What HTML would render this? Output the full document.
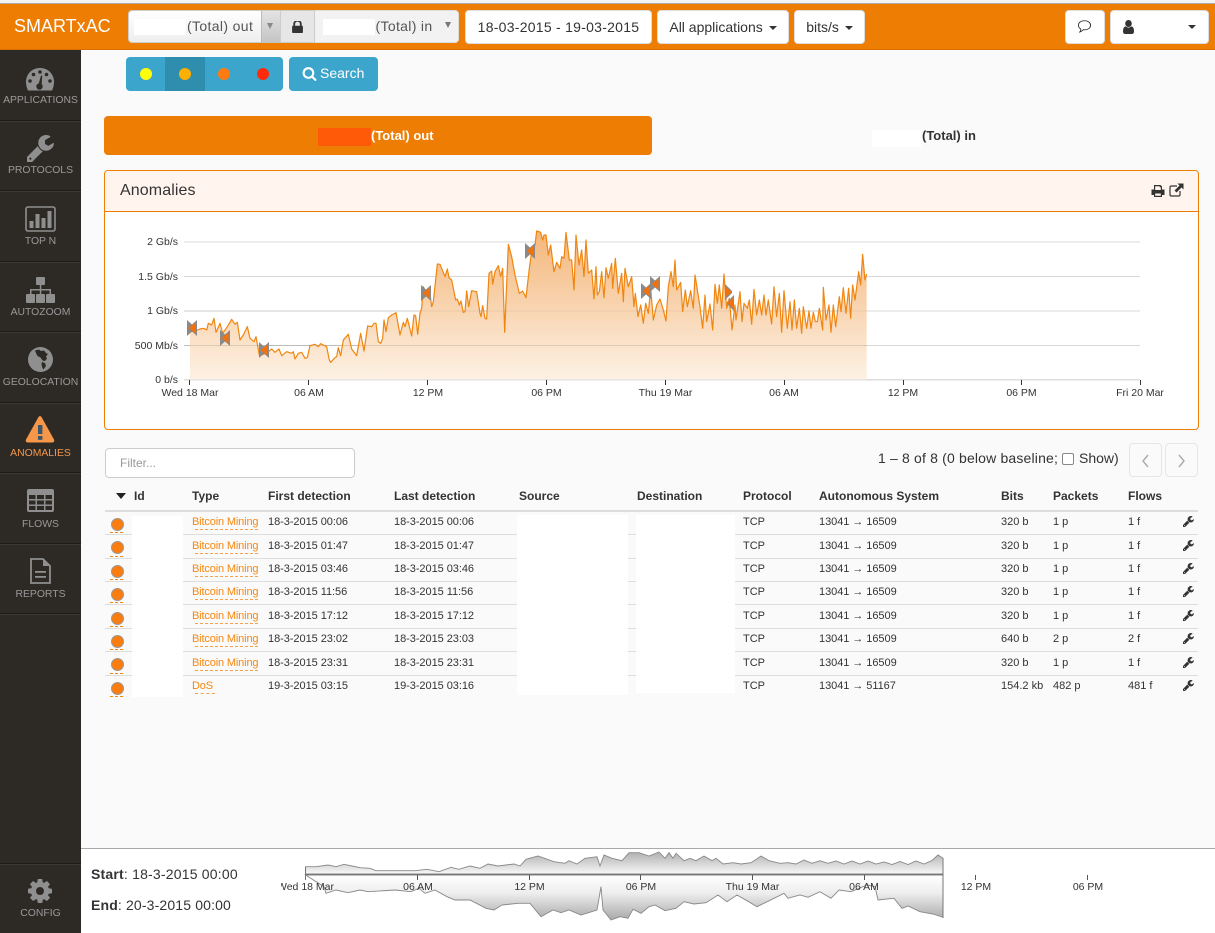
<!DOCTYPE html>
<html><head><meta charset="utf-8"><title>SMARTxAC</title>
<style>
html,body{margin:0;padding:0}
body{width:1215px;height:933px;position:relative;overflow:hidden;background:#fafafa;font-family:"Liberation Sans",sans-serif;color:#333}
.a,.t,.m,.c{position:absolute}
.t{white-space:nowrap}
.btn{position:absolute;top:10px;height:32px;line-height:33px;background:#fff;border:1px solid #ddd;border-radius:4px;font-size:14px;color:#333;text-align:center;white-space:nowrap}
.car{display:inline-block;width:0;height:0;border:4px solid transparent;border-top-color:#333;border-bottom:0;vertical-align:middle;margin-left:2px}
.m{left:0;width:81px;text-align:center;font-size:10.400px;line-height:12px;color:#999;white-space:nowrap}
.sep{position:absolute;left:0;width:81px;height:1px;background:#1d1b18;border-bottom:1px solid #3c3935}
.h{position:absolute;top:489px;font-size:12px;font-weight:bold;line-height:14px;color:#333;white-space:nowrap}
.l{position:absolute;left:105px;width:1093px;height:1px;background:#ddd}
.r{position:absolute;left:0;width:1215px;height:22px;line-height:22px;font-size:11px;color:#333}
.r span{position:absolute;white-space:nowrap}
.c1{left:192px;color:#f5870f;letter-spacing:-.15px}.c2{left:268px;letter-spacing:-.05px}.c3{left:394px;letter-spacing:-.05px}.c6{left:743px}.c7{left:819px;letter-spacing:-.05px}.c8{left:1001px}.c9{left:1053px}.c10{left:1128px}
.u{position:absolute;left:195px;width:63px;top:18px;border-top:1px dashed #f5a04a}
.o{position:absolute;left:110.500px;top:7px;width:11px;height:11px;border-radius:50%;background:#fb7d10;border:1px solid #999}
.d{position:absolute;left:110px;top:21px;width:13px;border-top:1px dashed #f5870f}
.w{position:absolute;left:1183px;top:5px;width:11px;height:11px}
.dot{position:absolute;top:67px;width:12px;height:12px;border-radius:50%}
svg{display:block}
</style></head><body>

<!-- top bar -->
<div class="a" style="left:0;top:0;width:1215px;height:3px;background:#f4f4f4;border-bottom:1px solid #aaa"></div>
<div class="a" style="left:0;top:4px;width:1215px;height:45px;background:#ee7d04;border-bottom:1px solid #d86f00"></div>
<div class="t" style="left:14px;top:15px;font-size:18px;line-height:22px;color:#fff">SMARTxAC</div>

<div class="a" style="left:128px;top:10px;width:153px;height:33px;background:linear-gradient(#fff,#eee);border-radius:4px 0 0 4px;border:1px solid #ccc;box-sizing:border-box"></div>
<div class="a" style="left:134px;top:19px;width:52px;height:16px;background:#fff"></div>
<div class="t" style="left:187px;top:18px;font-size:14px;line-height:17px;color:#555;letter-spacing:.36px">(Total) out</div>
<div class="a" style="left:261px;top:11px;width:18px;height:32px;background:linear-gradient(#e4e4e4,#c4c4c4);border-left:1px solid #bbb"></div>
<div class="a" style="left:267px;top:23px;border:3px solid transparent;border-top:6px solid #888;border-bottom:0"></div>
<div class="a" style="left:280px;top:10px;width:35px;height:33px;background:#e6e6e6;border:1px solid #ccc;box-sizing:border-box"></div>
<svg class="a" style="left:292px;top:21px" width="11" height="12" viewBox="320 256 1152 1280"><path fill="#333" d="M640 768h512v-192q0-106-75-181t-181-75-181 75-75 181v192zm832 96v576q0 40-28 68t-68 28h-960q-40 0-68-28t-28-68v-576q0-40 28-68t68-28h32v-192q0-184 132-316t316-132 316 132 132 316v192h32q40 0 68 28t28 68z"/></svg>
<div class="a" style="left:315px;top:10px;width:144px;height:33px;background:#f2f2f2;border-radius:0 4px 4px 0;border:1px solid #ddd;border-left:0;box-sizing:border-box"></div>
<div class="a" style="left:323px;top:19px;width:52px;height:16px;background:#fff"></div>
<div class="t" style="left:375.500px;top:18px;font-size:14px;line-height:17px;color:#555;letter-spacing:.33px">(Total) in</div>
<div class="a" style="left:445px;top:22px;border:3.500px solid transparent;border-top:6px solid #777;border-bottom:0"></div>

<div class="btn" style="left:465px;width:185px;letter-spacing:.26px">18-03-2015 - 19-03-2015</div>
<div class="btn" style="left:657px;width:130px">All applications <i class="car"></i></div>
<div class="btn" style="left:794px;width:69px">bits/s <i class="car"></i></div>
<div class="btn" style="left:1065px;width:38px"></div>
<svg class="a" style="left:1077px;top:19px" width="15" height="15" viewBox="0 0 15 14"><path d="M7.500 1.200C11 1.200 13.600 3.100 13.600 5.800C13.600 8.500 11 10.300 7.800 10.300C7.300 10.300 6.800 10.250 6.300 10.150C5.400 11.300 4.200 12 2.900 12.400C3.500 11.500 3.800 10.600 3.700 9.500C2.300 8.700 1.400 7.400 1.400 5.800C1.400 3.100 4 1.200 7.500 1.200Z" fill="none" stroke="#333" stroke-width=".9"/></svg>
<div class="btn" style="left:1110px;width:97px"></div>
<svg class="a" style="left:1123px;top:20px" width="11" height="14" viewBox="256 128 1280 1536" preserveAspectRatio="none"><path fill="#333" d="M1536 1399q0 109-62.500 187t-150.500 78h-854q-88 0-150.500-78t-62.500-187q0-85 8.500-160.500t31.500-152 58.500-131 94-89 134.500-34.500q131 128 313 128t313-128q76 0 134.500 34.500t94 89 58.500 131 31.500 152 8.500 160.500zm-256-887q0 159-112.500 271.500t-271.500 112.500-271.500-112.500-112.500-271.500 112.500-271.500 271.500-112.500 271.500 112.500 112.500 271.500z"/></svg>
<div class="a" style="left:1188px;top:25px;border:4px solid transparent;border-top-color:#333;border-bottom:0"></div>

<!-- sidebar -->
<div class="a" style="left:0;top:50px;width:81px;height:883px;background:#2d2a26"></div>
<div class="sep" style="top:120px"></div><div class="sep" style="top:190px"></div><div class="sep" style="top:261px"></div><div class="sep" style="top:331px"></div><div class="sep" style="top:402px"></div><div class="sep" style="top:472px"></div><div class="sep" style="top:543px"></div><div class="sep" style="top:613px"></div><div class="sep" style="top:863px"></div>

<svg class="a" style="left:25px;top:67px" width="30" height="25" viewBox="0 0 30 25"><path fill="#8f8f8f" fill-rule="evenodd" d="M15 1C7 1 1 7 1 15C1 18 1.800 21 3 23.500H27C28.200 21 29 18 29 15C29 7 23 1 15 1Z"/><g fill="#2d2a26"><circle cx="15" cy="5" r="1.800"/><circle cx="8.500" cy="7.500" r="1.800"/><circle cx="21.500" cy="7.500" r="1.800"/><circle cx="5" cy="14" r="1.800"/><circle cx="25" cy="14" r="1.800"/><circle cx="14.500" cy="19.500" r="3.200"/><path d="M13 19L16 8.500L17.200 8.800L16.500 20Z"/></g></svg>
<div class="m" style="top:95px">APPLICATIONS</div>

<svg class="a" style="left:27px;top:135px" width="27" height="27" viewBox="128 128 1536 1536"><path fill="#8f8f8f" d="M384 1472q0-26-19-45t-45-19-45 19-19 45 19 45 45 19 45-19 19-45zm644-420l-682 682q-37 37-90 37-52 0-91-37l-106-108q-38-36-38-90 0-53 38-91l681-681q39 98 114.500 173.500t173.500 114.500zm634-435q0 39-23 106-47 134-164.500 217.500t-258.500 83.500q-185 0-316.500-131.500t-131.500-316.500 131.500-316.500 316.500-131.500q58 0 121.500 16.500t107.500 46.500q16 11 16 28t-16 28l-293 169v224l193 107q5-3 79-48.500t135.500-81 70.500-35.500q15 0 23.500 10t8.500 25z"/></svg>
<div class="m" style="top:165px">PROTOCOLS</div>

<svg class="a" style="left:25px;top:206px" width="31" height="26" viewBox="0 0 31 26"><rect x="1" y="1" width="29" height="24" rx="2" fill="none" stroke="#8f8f8f" stroke-width="1.600"/><g fill="#8f8f8f"><rect x="4.500" y="15" width="4" height="7"/><rect x="10.500" y="8" width="4" height="14"/><rect x="16.500" y="12" width="4" height="10"/><rect x="22.500" y="5" width="4" height="17"/></g></svg>
<div class="m" style="top:236px">TOP N</div>

<svg class="a" style="left:25px;top:277px" width="30" height="27" viewBox="0 0 30 27"><g fill="#8f8f8f"><rect x="11" y="0" width="9" height="8" rx="1"/><rect x="1" y="17" width="9" height="9" rx="1"/><rect x="11" y="17" width="9" height="9" rx="1"/><rect x="21" y="17" width="9" height="9" rx="1"/><rect x="14.800" y="8" width="1.500" height="9"/><rect x="5" y="12" width="21" height="1.500"/><rect x="5" y="12" width="1.500" height="5"/><rect x="24.500" y="12" width="1.500" height="5"/></g></svg>
<div class="m" style="top:307px">AUTOZOOM</div>

<svg class="a" style="left:28px;top:347px" width="25" height="25" viewBox="0 0 25 25"><circle cx="12.500" cy="12.500" r="12.500" fill="#8f8f8f"/><path fill="#2d2a26" d="M7 3.500L11 2.500L13 4L16 3.500L18 6L20 7L18 9.500L19 11.500L17 14L14.500 13.500L12.500 10.500L9.500 9L8 6ZM14 15L17 16L18 19L15.500 22.500L14 20L13.500 17Z"/></svg>
<div class="m" style="top:377px">GEOLOCATION</div>

<svg class="a" style="left:25px;top:415px" width="30" height="28" viewBox="0 0 30 28"><path fill="#f59648" d="M13.500 2Q15 0 16.500 2L29 24.500Q30 27 27.500 27.500H2.500Q0 27 1 24.500Z"/><rect x="13" y="10" width="4.400" height="9" fill="#39566a"/><rect x="13" y="21" width="4.400" height="3.800" fill="#39566a"/></svg>
<div class="m" style="top:448px;color:#f5964a">ANOMALIES</div>

<svg class="a" style="left:27px;top:489px" width="27" height="24" viewBox="0 0 27 24"><rect x="0" y="0" width="27" height="23" rx="2" fill="#8f8f8f"/><g fill="#2d2a26"><rect x="2" y="6" width="6.500" height="4"/><rect x="10" y="6" width="7" height="4"/><rect x="18.500" y="6" width="6.500" height="4"/><rect x="2" y="11.500" width="6.500" height="4"/><rect x="10" y="11.500" width="7" height="4"/><rect x="18.500" y="11.500" width="6.500" height="4"/><rect x="2" y="17" width="6.500" height="4"/><rect x="10" y="17" width="7" height="4"/><rect x="18.500" y="17" width="6.500" height="4"/></g></svg>
<div class="m" style="top:519px">FLOWS</div>

<svg class="a" style="left:30px;top:558px" width="21" height="26" viewBox="0 0 21 26"><path d="M1 1H13L20 8V25H1Z" fill="none" stroke="#8f8f8f" stroke-width="1.800"/><path d="M13 1V8H20Z" fill="#8f8f8f"/><rect x="5" y="13" width="11" height="1.800" fill="#8f8f8f"/><rect x="5" y="18" width="11" height="1.800" fill="#8f8f8f"/></svg>
<div class="m" style="top:589px">REPORTS</div>

<svg class="a" style="left:28px;top:879px" width="24" height="24" viewBox="128 128 1536 1536"><path fill="#8f8f8f" d="M1152 896q0-106-75-181t-181-75-181 75-75 181 75 181 181 75 181-75 75-181zm512-109v222q0 12-8 23t-20 13l-185 28q-19 54-39 91 35 50 107 138 10 12 10 25t-9 23q-27 37-99 108t-94 71q-12 0-26-9l-138-108q-44 23-91 38-16 136-29 186-7 28-36 28h-222q-14 0-24.500-8.500t-11.500-21.500l-28-184q-49-16-90-37l-141 107q-10 9-25 9-14 0-25-11-126-114-165-168-7-10-7-23 0-12 8-23 15-21 51-66.500t54-70.500q-27-50-41-99l-183-27q-13-2-21-12.500t-8-23.500v-222q0-12 8-23t19-13l186-28q14-46 39-92-40-57-107-138-10-12-10-24 0-10 9-23 26-36 98.500-107.500t94.500-71.500q13 0 26 10l138 107q44-23 91-38 16-136 29-186 7-28 36-28h222q14 0 24.500 8.500t11.500 21.500l28 184q49 16 90 37l142-107q9-9 24-9 13 0 25 10 129 119 165 170 7 8 7 22 0 12-8 23-15 21-51 66.500t-54 70.500q26 50 41 98l183 28q13 2 21 12.500t8 23.500z"/></svg>
<div class="m" style="top:908px">CONFIG</div>

<!-- severity buttons -->
<div class="a" style="left:126px;top:57px;width:157px;height:34px;background:#3ba5cb;border-radius:4px"></div>
<div class="a" style="left:165px;top:57px;width:40px;height:34px;background:#2f8dae"></div>
<div class="dot" style="left:140px;top:68px;background:#ffff0a"></div>
<div class="dot" style="left:179px;top:68px;background:#ffb000"></div>
<div class="dot" style="left:218px;top:68px;background:#ff7b10"></div>
<div class="dot" style="left:257px;top:68px;background:#ff2a0a"></div>
<div class="a" style="left:289px;top:57px;width:89px;height:34px;background:#3ba5cb;border-radius:4px"></div>
<svg class="a" style="left:302px;top:66px" width="15" height="15" viewBox="0 0 1792 1792"><path fill="#fff" d="M1216 832q0-185-131.500-316.500t-316.500-131.500-316.500 131.500-131.500 316.500 131.500 316.500 316.500 131.500 316.500-131.500 131.500-316.500zm512 832q0 52-38 90t-90 38q-54 0-90-38l-343-342q-179 124-399 124-143 0-273.500-55.500t-225-150-150-225-55.500-273.500 55.500-273.500 150-225 225-150 273.500-55.500 273.500 55.500 225 150 150 225 55.500 273.500q0 220-124 399l343 343q37 37 37 90z"/></svg>
<div class="t" style="left:320px;top:65px;font-size:14px;line-height:17px;color:#fff">Search</div>

<!-- tabs -->
<div class="a" style="left:104px;top:116px;width:548px;height:39px;background:#ee7d04;border-radius:4px"></div>
<div class="a" style="left:318px;top:128px;width:53px;height:18px;background:#ff5a08"></div>
<div class="t" style="left:371px;top:128px;font-size:13px;font-weight:bold;line-height:16px;color:#fff">(Total) out</div>
<div class="a" style="left:872px;top:130px;width:49px;height:17px;background:#fff"></div>
<div class="t" style="left:922px;top:128px;font-size:13px;font-weight:bold;line-height:16px;color:#333">(Total) in</div>

<!-- panel -->
<div class="a" style="left:104px;top:170px;width:1095px;height:260px;box-sizing:border-box;background:#fff;border:1px solid #ee7d04;border-radius:4px"></div>
<div class="a" style="left:105px;top:171px;width:1093px;height:40px;background:#fff5ee;border-bottom:1px solid #ee7d04;border-radius:3px 3px 0 0"></div>
<div class="t" style="left:120px;top:181px;font-size:16px;line-height:19px;color:#333;letter-spacing:.1px">Anomalies</div>
<svg class="a" style="left:1151px;top:184px" width="14" height="14" viewBox="0 0 14 14"><path fill="#333" fill-rule="evenodd" d="M3 1H9.500L11 2.500V5.500H13.500V11H11V13H3V11H.500V5.500H3ZM4.200 2.200V6H9.800V3.300H8.700V2.200ZM4.200 9.500V11.800H9.800V9.500Z"/></svg>
<svg class="a" style="left:1169px;top:183px" width="15" height="14" viewBox="0 0 15 14"><path d="M8 3H2.500Q1 3 1 4.500V11.500Q1 13 2.500 13H9.500Q11 13 11 11.500V8" fill="none" stroke="#333" stroke-width="1.200"/><path fill="#333" d="M8.500 .500H14.500V6.500L12.500 4.500L7.500 9.500L5.500 7.500L10.500 2.500Z"/></svg>

<!-- chart -->
<svg class="a" style="left:0;top:0" width="1215" height="433" viewBox="0 0 1215 433">
<defs>
<linearGradient id="g" x1="0" y1="0" x2="0" y2="1"><stop offset="0" stop-color="#f4b67a"/><stop offset="1" stop-color="#fdf1e4"/></linearGradient>
<g id="mk"><path d="M-5 -8V8L0 3.500L5 8V-8L0 -3.500Z" fill="#8a8a8a"/><path d="M3.500 -5.500V5.500L-3.500 0Z" fill="#f0720f"/></g>
</defs>
<g stroke="#d8d8d8" stroke-width="1">
<path d="M184 242H1140M184 276.500H1140M184 311H1140M184 345.500H1140"/>
<path d="M184 379.800H1140" stroke="#ddd" stroke-width="1.500"/>
</g>
<path fill="url(#g)" transform="translate(100 225) scale(.33333)" d="M270 463V320L285 318L300 312L310 310L320 315L325 295L335 300L342 280L348 322L360 295L368 325L382 305L395 283L405 298L412 292L420 345L430 330L442 305L450 340L462 350L468 335L478 390L490 388L505 380L515 372L525 382L537 372L545 392L560 380L575 385L580 380L585 402L595 385L605 382L615 400L622 398L630 362L645 358L655 365L662 356L680 365L688 405L692 412L705 398L710 395L715 368L722 392L730 345L745 328L755 372L770 392L782 325L792 378L803 303L815 305L822 295L828 295L835 350L842 355L848 340L852 285L858 320L865 278L875 270L888 263L900 330L910 292L915 305L922 280L935 333L942 270L947 272L953 328L960 265L965 250L970 185L980 210L988 190L995 245L1000 230L1012 117L1020 118L1035 155L1042 132L1047 158L1055 165L1067 225L1072 222L1078 240L1083 228L1090 262L1095 260L1100 198L1106 245L1115 197L1130 200L1140 265L1143 275L1148 242L1155 280L1160 282L1167 145L1175 138L1178 178L1185 140L1195 122L1202 155L1208 130L1214 322L1225 58L1235 95L1245 150L1258 205L1268 198L1278 218L1288 130L1295 80L1305 60L1310 18L1322 22L1328 45L1332 30L1338 30L1345 90L1352 60L1362 140L1370 112L1380 130L1385 95L1392 100L1398 22L1408 105L1415 105L1422 195L1428 30L1437 120L1445 75L1452 155L1458 45L1465 145L1475 135L1482 222L1488 125L1492 210L1498 200L1505 140L1512 218L1518 128L1525 160L1535 115L1538 190L1546 100L1555 205L1565 145L1570 230L1575 130L1585 185L1595 155L1602 245L1606 205L1614 275L1622 240L1630 295L1637 235L1645 265L1652 190L1660 285L1670 240L1680 222L1690 255L1698 288L1705 185L1713 140L1720 185L1725 105L1730 195L1742 172L1748 260L1756 195L1762 245L1772 197L1780 250L1785 150L1800 245L1808 310L1815 210L1820 290L1830 237L1838 315L1845 178L1852 235L1858 180L1865 250L1872 147L1880 250L1888 220L1896 315L1905 240L1908 285L1920 200L1926 290L1932 235L1942 250L1948 225L1955 298L1962 193L1970 270L1978 225L1985 270L1992 210L1998 270L2005 225L2015 297L2022 185L2030 275L2038 205L2045 322L2052 197L2062 310L2070 230L2076 315L2083 225L2090 310L2098 250L2105 325L2110 245L2120 310L2127 258L2133 310L2140 262L2146 290L2152 290L2158 250L2168 315L2170 187L2178 285L2187 240L2193 322L2200 240L2207 305L2218 215L2223 260L2230 188L2238 265L2246 190L2252 280L2258 180L2265 225L2276 140L2282 180L2288 88L2295 165L2300 147V463Z"/>
<path d="M184 345.500H867" stroke="#000" stroke-opacity=".12" stroke-width="1"/>
<path d="M184 311H867" stroke="#000" stroke-opacity=".06" stroke-width="1"/>
<path fill="none" stroke="#f0860f" stroke-width="3.600" stroke-linejoin="round" transform="translate(100 225) scale(.33333)" d="M270 320L285 318L300 312L310 310L320 315L325 295L335 300L342 280L348 322L360 295L368 325L382 305L395 283L405 298L412 292L420 345L430 330L442 305L450 340L462 350L468 335L478 390L490 388L505 380L515 372L525 382L537 372L545 392L560 380L575 385L580 380L585 402L595 385L605 382L615 400L622 398L630 362L645 358L655 365L662 356L680 365L688 405L692 412L705 398L710 395L715 368L722 392L730 345L745 328L755 372L770 392L782 325L792 378L803 303L815 305L822 295L828 295L835 350L842 355L848 340L852 285L858 320L865 278L875 270L888 263L900 330L910 292L915 305L922 280L935 333L942 270L947 272L953 328L960 265L965 250L970 185L980 210L988 190L995 245L1000 230L1012 117L1020 118L1035 155L1042 132L1047 158L1055 165L1067 225L1072 222L1078 240L1083 228L1090 262L1095 260L1100 198L1106 245L1115 197L1130 200L1140 265L1143 275L1148 242L1155 280L1160 282L1167 145L1175 138L1178 178L1185 140L1195 122L1202 155L1208 130L1214 322L1225 58L1235 95L1245 150L1258 205L1268 198L1278 218L1288 130L1295 80L1305 60L1310 18L1322 22L1328 45L1332 30L1338 30L1345 90L1352 60L1362 140L1370 112L1380 130L1385 95L1392 100L1398 22L1408 105L1415 105L1422 195L1428 30L1437 120L1445 75L1452 155L1458 45L1465 145L1475 135L1482 222L1488 125L1492 210L1498 200L1505 140L1512 218L1518 128L1525 160L1535 115L1538 190L1546 100L1555 205L1565 145L1570 230L1575 130L1585 185L1595 155L1602 245L1606 205L1614 275L1622 240L1630 295L1637 235L1645 265L1652 190L1660 285L1670 240L1680 222L1690 255L1698 288L1705 185L1713 140L1720 185L1725 105L1730 195L1742 172L1748 260L1756 195L1762 245L1772 197L1780 250L1785 150L1800 245L1808 310L1815 210L1820 290L1830 237L1838 315L1845 178L1852 235L1858 180L1865 250L1872 147L1880 250L1888 220L1896 315L1905 240L1908 285L1920 200L1926 290L1932 235L1942 250L1948 225L1955 298L1962 193L1970 270L1978 225L1985 270L1992 210L1998 270L2005 225L2015 297L2022 185L2030 275L2038 205L2045 322L2052 197L2062 310L2070 230L2076 315L2083 225L2090 310L2098 250L2105 325L2110 245L2120 310L2127 258L2133 310L2140 262L2146 290L2152 290L2158 250L2168 315L2170 187L2178 285L2187 240L2193 322L2200 240L2207 305L2218 215L2223 260L2230 188L2238 265L2246 190L2252 280L2258 180L2265 225L2276 140L2282 180L2288 88L2295 165L2300 147"/>
<use href="#mk" x="192" y="328"/><use href="#mk" x="225" y="338"/><use href="#mk" x="264" y="350"/><use href="#mk" x="426" y="293"/><use href="#mk" x="530" y="251"/><use href="#mk" x="646" y="291"/><use href="#mk" x="655" y="284"/>
<g transform="translate(728 292)"><path d="M-3 -8L4 -1V1L-3 8Z" fill="#8a8a8a"/><path d="M-2 -5L4 0L-2 5Z" fill="#f0720f"/></g>
<g transform="translate(731 303)"><path d="M3 -8L-4 -1V1L3 8Z" fill="#8a8a8a"/><path d="M2 -5L-4 0L2 5Z" fill="#f0720f"/></g>
<g stroke="#333" stroke-width="1"><path d="M189.500 380V385M308.500 380V385M427.500 380V385M546.500 380V385M665.500 380V385M784.500 380V385M903.500 380V385M1021.500 380V385M1140.500 380V385"/></g>
<g font-family="Liberation Sans" font-size="10.500" fill="#333" text-anchor="end">
<text x="178" y="245">2 Gb/s</text><text x="178" y="280">1.5 Gb/s</text><text x="178" y="314">1 Gb/s</text><text x="178" y="349">500 Mb/s</text><text x="178" y="383">0 b/s</text>
</g>
<g font-family="Liberation Sans" font-size="10.500" fill="#333" text-anchor="middle">
<text x="190" y="396">Wed 18 Mar</text><text x="309" y="396">06 AM</text><text x="428" y="396">12 PM</text><text x="546.500" y="396">06 PM</text><text x="665.500" y="396">Thu 19 Mar</text><text x="784" y="396">06 AM</text><text x="903" y="396">12 PM</text><text x="1021.500" y="396">06 PM</text><text x="1140" y="396">Fri 20 Mar</text>
</g>
</svg>

<!-- filter + pagination -->
<div class="a" style="left:105px;top:448px;width:250px;height:30px;box-sizing:border-box;background:#fff;border:1px solid #ccc;border-radius:4px"></div>
<div class="t" style="left:120px;top:456px;font-size:12px;line-height:14px;color:#999">Filter...</div>
<div class="t" style="left:878px;top:450px;font-size:14px;line-height:17px;color:#333;letter-spacing:.17px">1 – 8 of 8 (0 below baseline;</div>
<div class="a" style="left:1062px;top:453px;width:10px;height:10px;border:1px solid #888;border-radius:2px;background:#fff"></div>
<div class="t" style="left:1079px;top:450px;font-size:14px;line-height:17px;color:#333">Show)</div>
<div class="a" style="left:1129px;top:443px;width:33px;height:34px;box-sizing:border-box;border:1px solid #e6e6e6;border-radius:4px"></div>
<div class="a" style="left:1165px;top:443px;width:33px;height:34px;box-sizing:border-box;border:1px solid #e6e6e6;border-radius:4px"></div>
<svg class="a" style="left:1129px;top:443px" width="70" height="34"><path d="M19 12L14 18L19 24M50 12L55 18L50 24" fill="none" stroke="#aaa" stroke-width="1.400"/></svg>

<!-- table header -->
<div class="a" style="left:116px;top:493px;border:5px solid transparent;border-top:6px solid #222;border-bottom:0"></div>
<div class="h" style="left:134px">Id</div><div class="h" style="left:192px">Type</div><div class="h" style="left:268px">First detection</div><div class="h" style="left:394px">Last detection</div><div class="h" style="left:519px">Source</div><div class="h" style="left:637px">Destination</div><div class="h" style="left:743px">Protocol</div><div class="h" style="left:819px">Autonomous System</div><div class="h" style="left:1001px">Bits</div><div class="h" style="left:1053px">Packets</div><div class="h" style="left:1128px">Flows</div>
<div class="a" style="left:105px;top:510px;width:1093px;height:2px;background:#ddd"></div>
<div class="l" style="top:534px"></div><div class="l" style="top:558px"></div><div class="l" style="top:581px"></div><div class="l" style="top:604px"></div><div class="l" style="top:628px"></div><div class="l" style="top:651px"></div><div class="l" style="top:675px"></div>
<div class="a" style="left:132px;top:516px;width:51px;height:181px;background:#fff"></div>
<div class="a" style="left:517px;top:515px;width:111px;height:180px;background:#fff"></div>
<div class="a" style="left:636px;top:515px;width:99px;height:178px;background:#fff"></div>

<svg width="0" height="0" style="position:absolute"><defs><path id="wr" fill="#333" d="M384 1472q0-26-19-45t-45-19-45 19-19 45 19 45 45 19 45-19 19-45zm644-420l-682 682q-37 37-90 37-52 0-91-37l-106-108q-38-36-38-90 0-53 38-91l681-681q39 98 114.500 173.500t173.500 114.500zm634-435q0 39-23 106-47 134-164.500 217.500t-258.500 83.500q-185 0-316.500-131.500t-131.500-316.500 131.500-316.500 316.500-131.500q58 0 121.500 16.500t107.500 46.500q16 11 16 28t-16 28l-293 169v224l193 107q5-3 79-48.500t135.500-81 70.500-35.500q15 0 23.500 10t8.500 25z"/></defs></svg>

<div class="r" style="top:511px"><i class="o"></i><i class="d"></i><span class="c1">Bitcoin Mining</span><i class="u"></i><span class="c2">18-3-2015 00:06</span><span class="c3">18-3-2015 00:06</span><span class="c6">TCP</span><span class="c7">13041 → 16509</span><span class="c8">320 b</span><span class="c9">1 p</span><span class="c10">1 f</span><svg class="w" viewBox="128 128 1536 1536"><use href="#wr"/></svg></div>
<div class="r" style="top:535px"><i class="o" style="top:6px"></i><i class="d"></i><span class="c1">Bitcoin Mining</span><i class="u"></i><span class="c2">18-3-2015 01:47</span><span class="c3">18-3-2015 01:47</span><span class="c6">TCP</span><span class="c7">13041 → 16509</span><span class="c8">320 b</span><span class="c9">1 p</span><span class="c10">1 f</span><svg class="w" viewBox="128 128 1536 1536"><use href="#wr"/></svg></div>
<div class="r" style="top:558px"><i class="o"></i><i class="d"></i><span class="c1">Bitcoin Mining</span><i class="u"></i><span class="c2">18-3-2015 03:46</span><span class="c3">18-3-2015 03:46</span><span class="c6">TCP</span><span class="c7">13041 → 16509</span><span class="c8">320 b</span><span class="c9">1 p</span><span class="c10">1 f</span><svg class="w" viewBox="128 128 1536 1536"><use href="#wr"/></svg></div>
<div class="r" style="top:581px"><i class="o"></i><i class="d"></i><span class="c1">Bitcoin Mining</span><i class="u"></i><span class="c2">18-3-2015 11:56</span><span class="c3">18-3-2015 11:56</span><span class="c6">TCP</span><span class="c7">13041 → 16509</span><span class="c8">320 b</span><span class="c9">1 p</span><span class="c10">1 f</span><svg class="w" viewBox="128 128 1536 1536"><use href="#wr"/></svg></div>
<div class="r" style="top:605px"><i class="o"></i><i class="d"></i><span class="c1">Bitcoin Mining</span><i class="u"></i><span class="c2">18-3-2015 17:12</span><span class="c3">18-3-2015 17:12</span><span class="c6">TCP</span><span class="c7">13041 → 16509</span><span class="c8">320 b</span><span class="c9">1 p</span><span class="c10">1 f</span><svg class="w" viewBox="128 128 1536 1536"><use href="#wr"/></svg></div>
<div class="r" style="top:628px"><i class="o"></i><i class="d"></i><span class="c1">Bitcoin Mining</span><i class="u"></i><span class="c2">18-3-2015 23:02</span><span class="c3">18-3-2015 23:03</span><span class="c6">TCP</span><span class="c7">13041 → 16509</span><span class="c8">640 b</span><span class="c9">2 p</span><span class="c10">2 f</span><svg class="w" viewBox="128 128 1536 1536"><use href="#wr"/></svg></div>
<div class="r" style="top:652px"><i class="o" style="top:6px"></i><i class="d"></i><span class="c1">Bitcoin Mining</span><i class="u"></i><span class="c2">18-3-2015 23:31</span><span class="c3">18-3-2015 23:31</span><span class="c6">TCP</span><span class="c7">13041 → 16509</span><span class="c8">320 b</span><span class="c9">1 p</span><span class="c10">1 f</span><svg class="w" viewBox="128 128 1536 1536"><use href="#wr"/></svg></div>
<div class="r" style="top:675px"><i class="o"></i><i class="d"></i><span class="c1">DoS</span><i class="u" style="width:20px"></i><span class="c2">19-3-2015 03:15</span><span class="c3">19-3-2015 03:16</span><span class="c6">TCP</span><span class="c7">13041 → 51167</span><span class="c8">154.2 kb</span><span class="c9">482 p</span><span class="c10">481 f</span><svg class="w" viewBox="128 128 1536 1536"><use href="#wr"/></svg></div>

<!-- bottom -->
<div class="a" style="left:81px;top:848px;width:1134px;height:85px;background:#fff;border-top:1px solid #aaa;box-sizing:border-box"></div>
<div class="t" style="left:91px;top:866px;font-size:14px;line-height:17px;color:#333;letter-spacing:.2px"><b>Start</b>: 18-3-2015 00:00</div>
<div class="t" style="left:91px;top:897px;font-size:14px;line-height:17px;color:#333;letter-spacing:.15px"><b>End</b>: 20-3-2015 00:00</div>

<svg class="a" style="left:281px;top:849px" width="840" height="84" viewBox="281 849 840 84">
<defs>
<linearGradient id="gt" x1="0" y1="0" x2="0" y2="1"><stop offset="0" stop-color="#b0b0b0"/><stop offset="1" stop-color="#f8f8f8"/></linearGradient>
<linearGradient id="gb" x1="0" y1="0" x2="0" y2="1"><stop offset="0" stop-color="#fff"/><stop offset=".4" stop-color="#eee"/><stop offset="1" stop-color="#a8a8a8"/></linearGradient>
</defs>
<path fill="url(#gt)" stroke="#888" stroke-width=".9" d="M305.600 874V866.700L316 866.700L328 865L336 866.700L344 864.300L352 866L360 867.700L370 868.300L376 870.700L415 870.700L427 869.300L439 871.700L451 867.300L459 869.300L470 866L480 868.300L488 864L498 866L514 864L520 866L526 859.300L538 856L554 861.700L565 863.300L569 860.700L577 864L585 858.300L597 856.700L600 866L604 855L612 858.300L622 860.700L629 852.700L639 852.700L649 856L659 852L665 858.300L669 852.700L673 858.300L676 853.300L684 860.700L690 858.300L696 860.700L704 856L712 860.700L716 858.300L723 864L733 862.700L741 864L751 862.700L761 856L769 860.700L780 863.300L788 862.700L796 864L804 860L812 863.300L820 860.700L828 863.300L836 861L844 864L852 861L860 864L868 861L876 864L884 862L892 864.500L900 861.500L908 864.500L916 861L924 864L932 860.500L938 855L943 858.300V874Z"/>
<path fill="url(#gb)" stroke="#888" stroke-width=".9" d="M305.600 875L324 886.700L326 893.300L336 890L348 892.700L360 890L368 891.700L395 890L411 891.700L419 888.300L425 893.300L435 890L447 896.700L455 900L470 900L486 908.300L494 910L502 905L518 903.300L530 903.300L541 916.700L553 910L561 912.700L569 910L581 915L597 910L601 886.700L603 910L611 920L620 916.700L628 918.300L633 909.300L641 913.300L649 906.700L655 905L665 910.700L676 908.300L684 901.700L694 904L706 902.700L718 895L727 901.700L737 895L747 900.700L757 906.700L772 899.300L784 893.300L788 898.300L800 895L808 897.300L820 891.700L831 898.300L839 890L851 891.700L867 885L875 886.700L878 900L894 898.300L902 908.300L908 906L920 911.700L933 914L943 917.300V875Z"/>
<path d="M305.500 866.700V880M943 858V918" stroke="#777" stroke-width="1" fill="none"/>
<path d="M305 874.500H943" stroke="#777" stroke-width="1.200"/>
<path d="M417.500 875V880M529.500 875V880M640.500 875V880M752.500 875V880M864.500 875V880M975.500 875V880M1087.500 875V880" stroke="#555" stroke-width="1"/>
<g font-family="Liberation Sans" font-size="10.500" fill="#333" text-anchor="middle">
<text x="305.500" y="890">Wed 18 Mar</text><text x="418" y="890">06 AM</text><text x="529.500" y="890">12 PM</text><text x="641" y="890">06 PM</text><text x="752.500" y="890">Thu 19 Mar</text><text x="864" y="890">06 AM</text><text x="976" y="890">12 PM</text><text x="1088" y="890">06 PM</text>
</g>
</svg>
</body></html>
